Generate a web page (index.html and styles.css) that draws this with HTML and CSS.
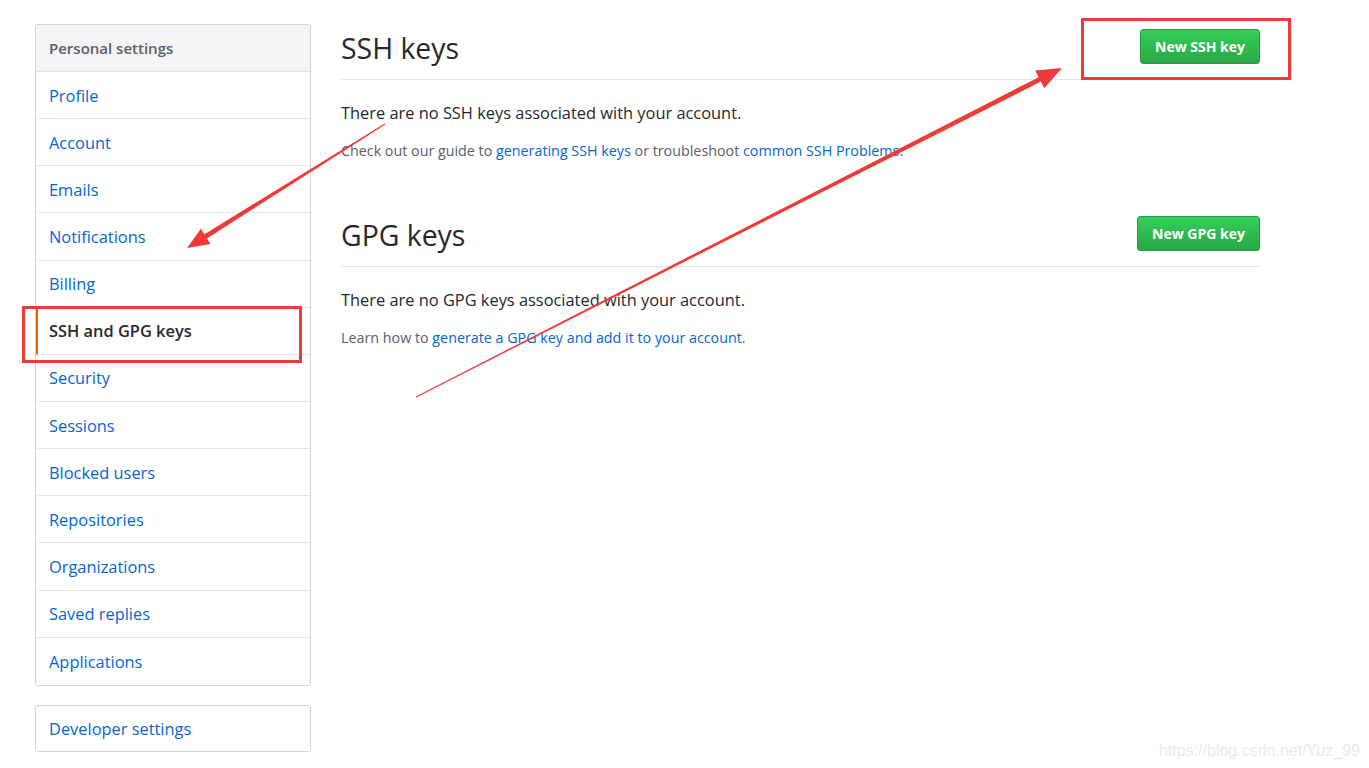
FILE: index.html
```html
<!DOCTYPE html>
<html lang="en">
<head>
  <meta charset="UTF-8">
  <title>SSH and GPG keys</title>
  <link rel="stylesheet" href="styles.css">
</head>
<body>
  <div class="page">
    <aside class="side">
      <nav class="menu">
        <div class="menu-head">Personal settings</div>
        <a class="menu-item" href="#">Profile</a>
        <a class="menu-item" href="#">Account</a>
        <a class="menu-item" href="#">Emails</a>
        <a class="menu-item" href="#">Notifications</a>
        <a class="menu-item" href="#">Billing</a>
        <a class="menu-item selected" href="#">SSH and GPG keys</a>
        <a class="menu-item" href="#">Security</a>
        <a class="menu-item" href="#">Sessions</a>
        <a class="menu-item" href="#">Blocked users</a>
        <a class="menu-item" href="#">Repositories</a>
        <a class="menu-item" href="#">Organizations</a>
        <a class="menu-item" href="#">Saved replies</a>
        <a class="menu-item" href="#">Applications</a>
      </nav>
      <nav class="menu">
        <a class="menu-item single" href="#">Developer settings</a>
      </nav>
    </aside>

    <main class="main">
      <section class="keys">
        <div class="keys-head">
          <h2>SSH keys</h2>
          <button class="btn">New SSH key</button>
        </div>
        <p class="blank">There are no SSH keys associated with your account.</p>
        <p class="note">Check out our guide to <a href="#">generating SSH keys</a> or troubleshoot <a href="#">common SSH Problems</a>.</p>
      </section>

      <section class="keys">
        <div class="keys-head">
          <h2>GPG keys</h2>
          <button class="btn">New GPG key</button>
        </div>
        <p class="blank">There are no GPG keys associated with your account.</p>
        <p class="note">Learn how to <a href="#">generate a GPG key and add it to your account</a>.</p>
      </section>
    </main>
  </div>

  <!-- red annotations drawn on top of the screenshot -->
  <svg class="marks" width="1369" height="768" viewBox="0 0 1369 768">
    <rect x="1082.5" y="19.5" width="207" height="59" fill="none" stroke="#f03a3a" stroke-width="3"/>
    <rect x="23.5" y="307.5" width="277" height="54" fill="none" stroke="#f03a3a" stroke-width="3"/>
    <polygon fill="#f03a3a" points="385.3,124.4 207.0,238.4 210.5,243.9 187,248 200.9,228.7 204.4,234.2 384.7,123.6"/>
    <polygon fill="#f03a3a" points="416.2,397.4 1040.8,81.6 1044.2,88.3 1062,68 1035.2,70.5 1038.6,77.2 415.8,396.6"/>
  </svg>

  <div class="mark-url">https://blog.csdn.net/Yuz_99</div>
</body>
</html>
```

FILE: styles.css
```css
* {
  box-sizing: border-box;
}
body {
  margin: 0;
  font-family: "Open Sans", "Noto Sans", sans-serif;
  color: #24292e;
  background: #fff;
}
a {
  color: #0366d6;
  text-decoration: none;
}
.page {
  display: flex;
  padding: 24px 0 0 35px;
  gap: 30px;
}
.side {
  width: 276px;
  flex-shrink: 0;
}
.menu {
  border: 1px solid #d1d5da;
  border-radius: 3px;
  margin-bottom: 19px;
}
.menu-head {
  height: 47px;
  padding: 0 13px;
  display: flex;
  align-items: center;
  background: #f3f4f6;
  border-bottom: 1px solid #e1e4e8;
  color: #586069;
  font-size: 15px;
  font-weight: 600;
  border-radius: 3px 3px 0 0;
}
.menu-item {
  display: flex;
  align-items: center;
  height: 47.15px;
  padding: 0 13px;
  font-size: 16.4px;
  border-bottom: 1px solid #e1e4e8;
}
.menu-item:last-child {
  border-bottom: none;
}
.menu-item.single {
  height: 45px;
}
.menu-item.selected {
  color: #24292e;
  font-weight: 600;
  border-left: 2px solid #e36209;
  padding-left: 11px;
}
.main {
  width: 919px;
  padding-top: 4px;
}
.keys {
  margin-bottom: 55px;
}
.keys-head {
  display: flex;
  justify-content: space-between;
  align-items: flex-end;
  height: 52px;
  border-bottom: 1px solid #e1e4e8;
}
.keys-head h2 {
  margin: 0 0 13px;
  font-size: 28.4px;
  font-weight: 400;
  line-height: 1.25;
}
.btn {
  height: 35px;
  padding: 0 14px;
  margin-bottom: 15px;
  border: 1px solid #2b9b43;
  border-radius: 3px;
  background: linear-gradient(#34d058, #28a745);
  color: #fff;
  font-family: inherit;
  font-size: 14px;
  font-weight: 700;
}
.blank {
  margin: 21px 0 0;
  font-size: 16.4px;
}
.note {
  margin: 17px 0 0;
  font-size: 14.3px;
  color: #586069;
}
.marks {
  position: absolute;
  left: 0;
  top: 0;
  pointer-events: none;
}
.mark-url {
  position: absolute;
  right: 9px;
  bottom: 8px;
  font-family: "Liberation Sans", sans-serif;
  font-size: 16px;
  color: #ebebeb;
}
```
